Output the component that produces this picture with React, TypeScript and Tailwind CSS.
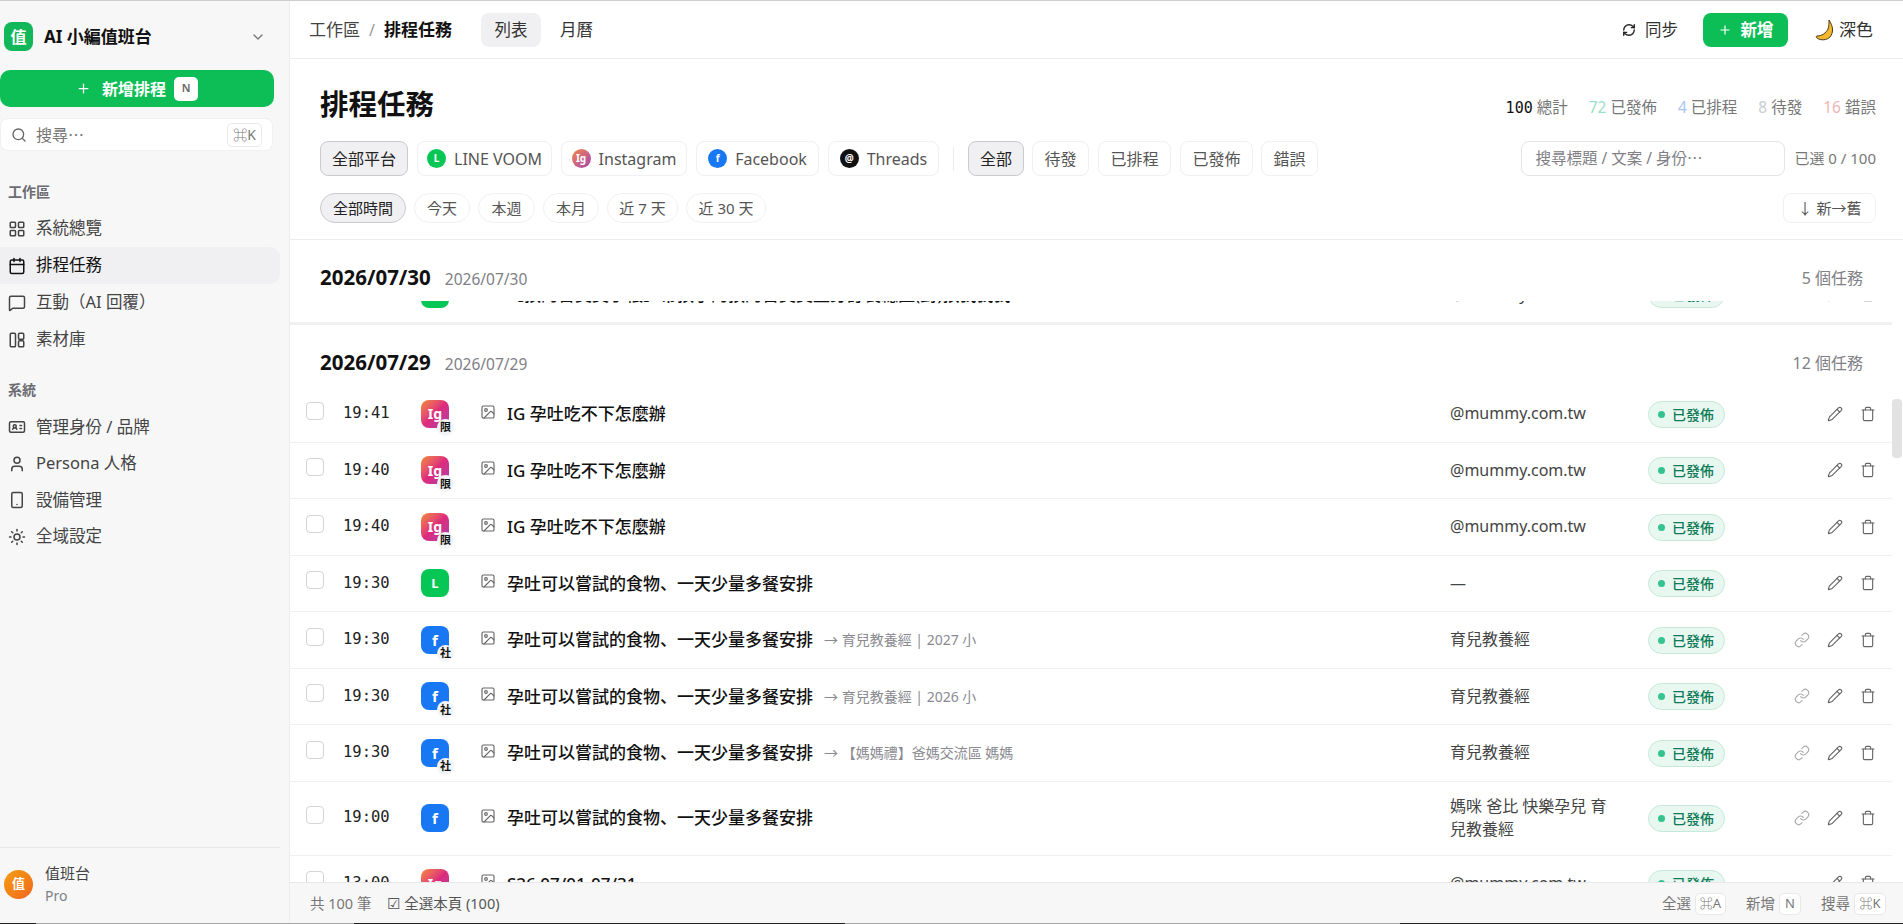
import { ChevronDown, IdCard, Image, LayoutGrid, Link, MessageSquare, Pencil, Plus, RefreshCw, Search, Smartphone, Sun, Trash, User, Calendar } from 'lucide-react';

type Platform = 'line' | 'ig' | 'fb';

type Task = {
  time: string;
  platform: Platform;
  badge?: string;
  title: string;
  target?: string;
  account: string;
  link?: boolean;
  tall?: boolean;
};

const tasks: Task[] = [
  { time: '19:41', platform: 'ig', badge: '限', title: 'IG 孕吐吃不下怎麼辦', account: '@mummy.com.tw' },
  { time: '19:40', platform: 'ig', badge: '限', title: 'IG 孕吐吃不下怎麼辦', account: '@mummy.com.tw' },
  { time: '19:40', platform: 'ig', badge: '限', title: 'IG 孕吐吃不下怎麼辦', account: '@mummy.com.tw' },
  { time: '19:30', platform: 'line', title: '孕吐可以嘗試的食物、一天少量多餐安排', account: '—' },
  { time: '19:30', platform: 'fb', badge: '社', title: '孕吐可以嘗試的食物、一天少量多餐安排', target: '→ 育兒教養經 | 2027 小', account: '育兒教養經', link: true },
  { time: '19:30', platform: 'fb', badge: '社', title: '孕吐可以嘗試的食物、一天少量多餐安排', target: '→ 育兒教養經 | 2026 小', account: '育兒教養經', link: true },
  { time: '19:30', platform: 'fb', badge: '社', title: '孕吐可以嘗試的食物、一天少量多餐安排', target: '→ 【媽媽禮】爸媽交流區 媽媽', account: '育兒教養經', link: true },
  { time: '19:00', platform: 'fb', title: '孕吐可以嘗試的食物、一天少量多餐安排', account: '媽咪 爸比 快樂孕兒 育兒教養經', link: true, tall: true },
];

function PlatformIcon({ platform, badge }: { platform: Platform; badge?: string }) {
  return (
    <div className="relative h-7 w-7">
      {platform === 'line' && <div className="flex h-7 w-7 items-center justify-center rounded-lg bg-[#06c755] text-[13px] font-bold text-white">L</div>}
      {platform === 'fb' && <div className="flex h-7 w-7 items-center justify-center rounded-lg bg-[#1877f2] text-[15px] font-bold text-white">f</div>}
      {platform === 'ig' && <div className="flex h-7 w-7 items-center justify-center rounded-lg bg-gradient-to-br from-[#f58529] via-[#dd2a7b] to-[#a93bb0] text-[14px] font-bold text-white">Ig</div>}
      {badge && (
        <span className="absolute -right-[5px] -bottom-[8px] flex h-[17px] w-[17px] items-center justify-center rounded-full bg-[#f3f4f6] text-[11px] font-semibold text-[#111]">
          {badge}
        </span>
      )}
    </div>
  );
}

function StatusBadge() {
  return (
    <span className="inline-flex h-[27px] w-[77px] items-center gap-[7px] rounded-full border border-[#c4e9da] bg-[#e8f8f1] pl-[9px] text-[14px] font-medium text-[#0f7a58]">
      <span className="h-[7px] w-[7px] rounded-full bg-[#34c38f]" />
      已發佈
    </span>
  );
}

function TaskRow({ task }: { task: Task }) {
  return (
    <div className={`flex items-center border-b border-[#f0f0f2] ${task.tall ? 'h-[74px]' : 'h-[56.5px]'}`}>
      <div className="ml-4 h-[18px] w-[18px] shrink-0 -translate-y-[3px] rounded-[4px] border border-[#d4d4d8] bg-white" />
      <div className="ml-[19px] w-[78px] shrink-0 font-['DejaVu_Sans_Mono',monospace] text-[15.5px] text-[#222]">{task.time}</div>
      <PlatformIcon platform={task.platform} badge={task.badge} />
      <Image size={16} strokeWidth={1.7} className="ml-[31px] shrink-0 -translate-y-[2px] text-[#666]" />
      <div className="ml-[11px] flex min-w-0 flex-1 items-center gap-[11px] whitespace-nowrap">
        <span className="text-[17px] font-medium text-[#111]">{task.title}</span>
        {task.target && <span className="text-[14px] text-[#8a8a90]">{task.target}</span>}
      </div>
      <div className="w-[198px] shrink-0 pr-[32px] text-[16px] leading-[23px] text-[#444]">{task.account}</div>
      <div className="w-[130px] shrink-0"><StatusBadge /></div>
      <div className="flex w-[98px] shrink-0 items-center justify-end gap-[17px] text-[#666]">
        {task.link && <Link size={16} strokeWidth={1.7} className="text-[#aaa]" />}
        <Pencil size={16} strokeWidth={1.7} />
        <Trash size={16} strokeWidth={1.7} />
      </div>
      <div className="w-4 shrink-0" />
    </div>
  );
}

function GroupHeader({ date, count }: { date: string; count: string }) {
  return (
    <div className="flex h-[61px] items-center justify-between bg-white pt-[14px] pr-[29px] pl-[30px]">
      <div className="flex items-baseline gap-[14px]">
        <span className="text-[20.5px] font-bold text-[#111]">{date}</span>
        <span className="text-[15.5px] text-[#808086]">{date}</span>
      </div>
      <span className="text-[16px] text-[#808086]">{count}</span>
    </div>
  );
}

function Kbd({ children, className = '' }: { children: React.ReactNode; className?: string }) {
  return (
    <span className={`flex items-center justify-center rounded-[5px] border border-[#e8e8ea] bg-white text-[13px] text-[#777] ${className}`}>
      {children}
    </span>
  );
}

function NavItem({ icon, label, active, compact }: { icon: React.ReactNode; label: string; active?: boolean; compact?: boolean }) {
  return (
    <div className={`flex w-[280px] items-center gap-[10px] rounded-r-[10px] pl-2 text-[16.5px] ${compact ? 'h-[36.5px]' : 'h-[37px]'} ${active ? 'bg-[#f0f0f2] text-[#111]' : 'text-[#444]'}`}>
      {icon}
      {label}
    </div>
  );
}

function PanelsIcon() {
  return (
    <svg width="18" height="18" viewBox="0 0 24 24" fill="none" stroke="currentColor" strokeWidth="2">
      <rect x="3" y="3" width="7" height="18" rx="1.5" />
      <rect x="14" y="3" width="7" height="8" rx="1.5" />
      <rect x="14" y="13" width="7" height="8" rx="1.5" />
    </svg>
  );
}

function Chip({ children, active, pill, className = '' }: { children: React.ReactNode; active?: boolean; pill?: boolean; className?: string }) {
  return (
    <div
      className={`flex shrink-0 items-center justify-center border ${pill ? 'h-[30px] rounded-full text-[15px]' : 'h-[35px] rounded-lg text-[16px]'} ${
        active ? 'border-[#c9c9ce] bg-[#f0f0f2] text-[#222]' : 'border-[#f0f0f2] bg-white text-[#555]'
      } ${className}`}
    >
      {children}
    </div>
  );
}

function Dot({ className, children }: { className: string; children: string }) {
  return <span className={`mr-2 flex h-[19px] w-[19px] items-center justify-center rounded-full text-[10px] font-bold text-white ${className}`}>{children}</span>;
}

export default function App() {
  return (
    <div className="relative flex h-[924px] w-[1903px] overflow-hidden border-t border-[#cfcfcf] bg-white font-['Noto_Sans','Noto_Sans_CJK_JP',sans-serif]">
      <aside className="flex h-full w-[290px] shrink-0 flex-col border-r border-[#ececee] bg-[#f7f7f8]">
        <div className="flex h-[69px] items-center pt-[2px] pr-[23px] pl-1">
          <div className="flex h-[29px] w-[29px] items-center justify-center rounded-lg bg-[#12b75a] text-[16px] font-bold text-white">值</div>
          <span className="ml-[11px] text-[17px] font-bold text-[#111]">AI 小編值班台</span>
          <ChevronDown size={16} className="ml-auto text-[#777]" />
        </div>
        <div className="flex h-[37px] w-[274px] items-center justify-center rounded-[10px] bg-[#0dbd55] text-[16px] font-bold text-white">
          <Plus size={15} strokeWidth={2} />
          <span className="ml-[11px]">新增排程</span>
          <span className="ml-[8px] flex h-6 w-6 items-center justify-center rounded-[5px] bg-white text-[11px] font-semibold text-[#666]">N</span>
        </div>
        <div className="mt-[11px] flex h-[33px] w-[273px] items-center rounded-lg border border-[#f0f0f2] bg-white pr-[10px] pl-[10px]">
          <Search size={16} className="text-[#666]" />
          <span className="ml-[9px] text-[16px] text-[#777]">搜尋⋯</span>
          <Kbd className="ml-auto h-6 w-[35px] !text-[14px]">⌘K</Kbd>
        </div>
        <div className="mt-[30px] mb-[8px] pl-2 text-[14px] font-semibold text-[#6b6b72]">工作區</div>
        <NavItem icon={<LayoutGrid size={18} />} label="系統總覽" />
        <NavItem icon={<Calendar size={18} />} label="排程任務" active />
        <NavItem icon={<MessageSquare size={18} />} label="互動（AI 回覆）" />
        <NavItem icon={<PanelsIcon />} label="素材庫" />
        <div className="mt-[21px] mb-[9px] pl-2 text-[14px] font-semibold text-[#6b6b72]">系統</div>
        <NavItem compact icon={<IdCard size={18} />} label="管理身份 / 品牌" />
        <NavItem compact icon={<User size={18} />} label="Persona 人格" />
        <NavItem compact icon={<Smartphone size={18} />} label="設備管理" />
        <NavItem compact icon={<Sun size={18} />} label="全域設定" />
        <div className="mt-auto flex h-[77px] w-[280px] items-center gap-3 border-t border-[#e8e8ea] pb-[4px] pl-1">
          <div className="flex h-[29px] w-[29px] items-center justify-center rounded-full bg-gradient-to-br from-[#f59e0b] to-[#f0641e] text-[13px] font-bold text-white">值</div>
          <div>
            <div className="text-[15px] leading-[23px] text-[#444]">值班台</div>
            <div className="text-[14px] leading-[22px] text-[#808086]">Pro</div>
          </div>
        </div>
      </aside>

      <main className="relative flex min-w-0 flex-1 flex-col">
        <header className="flex h-[58px] shrink-0 items-center border-b border-[#ececee] pt-[1px] pr-[30px] pl-[19px]">
          <span className="text-[17px] text-[#444]">工作區</span>
          <span className="mx-[9px] text-[16px] text-[#999]">/</span>
          <span className="text-[17px] font-bold text-[#111]">排程任務</span>
          <div className="ml-[29px] flex h-[34px] w-[60px] items-center justify-center rounded-lg bg-[#f0f0f2] text-[16.5px] text-[#333]">列表</div>
          <div className="ml-[19px] text-[16.5px] text-[#333]">月曆</div>
          <RefreshCw size={14} strokeWidth={2.4} className="ml-auto text-[#222]" />
          <span className="ml-[9px] text-[16.5px] text-[#333]">同步</span>
          <div className="ml-[25px] flex h-[34px] w-[85px] items-center justify-center gap-[9px] rounded-lg bg-[#0dbd55] text-[16.5px] font-bold text-white">
            <Plus size={14} />
            新增
          </div>
          <svg className="ml-[25px]" width="24" height="24" viewBox="0 0 24 24">
            <path d="M16 2c4 6 5 12 1 17-3 3-9 4-13 1-1-1-1-2 0-2 5 0 9-3 11-7 1-3 1-6 1-9z" fill="#f5b82e" stroke="#4a3a12" strokeWidth="1" />
          </svg>
          <span className="ml-[2px] text-[17px] text-[#333]">深色</span>
        </header>

        <section className="h-[181px] shrink-0 border-b border-[#ececee] pr-[27px] pl-[30px]">
          <div className="flex h-[82px] items-center justify-between pt-2">
            <h1 className="text-[28.5px] font-bold text-[#111]">排程任務</h1>
            <div className="mt-2 flex items-center gap-[21px] text-[15.5px] text-[#777]">
              <span><span className="mr-[4px] font-['DejaVu_Sans_Mono',monospace] text-[15px] text-[#111]">100</span>總計</span>
              <span><span className="mr-[4px] text-[#9adfc6]">72</span>已發佈</span>
              <span><span className="mr-[4px] text-[#a9c4ee]">4</span>已排程</span>
              <span><span className="mr-[4px] text-[#c9ccd2]">8</span>待發</span>
              <span><span className="mr-[4px] text-[#eeb6b6]">16</span>錯誤</span>
            </div>
          </div>
          <div className="flex items-center gap-[9px]">
            <Chip active className="w-[88px]">全部平台</Chip>
            <Chip className="w-[135px]"><Dot className="bg-[#06c755]">L</Dot>LINE VOOM</Chip>
            <Chip className="w-[126px]"><Dot className="bg-gradient-to-br from-[#f58529] to-[#a93bb0]">Ig</Dot>Instagram</Chip>
            <Chip className="w-[123px]"><Dot className="bg-[#1877f2]">f</Dot>Facebook</Chip>
            <Chip className="w-[111px]"><Dot className="bg-[#111]">@</Dot>Threads</Chip>
            <div className="mx-[5px] h-[24px] w-px bg-[#ececee]" />
            <Chip active className="w-[56px]">全部</Chip>
            <Chip className="-ml-[1px] w-[57px]">待發</Chip>
            <Chip className="w-[73px]">已排程</Chip>
            <Chip className="w-[73px]">已發佈</Chip>
            <Chip className="-ml-[1px] w-[57px]">錯誤</Chip>
            <div className="ml-auto flex h-[35px] w-[264px] items-center rounded-lg border border-[#e4e4e7] px-[13px] text-[15.5px] text-[#808086]">搜尋標題 / 文案 / 身份⋯</div>
            <span className="text-[15px] whitespace-nowrap text-[#777]">已選 0 / 100</span>
          </div>
          <div className="mt-[17px] flex items-center gap-2">
            <Chip pill active className="w-[86px]">全部時間</Chip>
            <Chip pill className="w-[56px]">今天</Chip>
            <Chip pill className="w-[57px]">本週</Chip>
            <Chip pill className="w-[56px]">本月</Chip>
            <Chip pill className="w-[71px]">近 7 天</Chip>
            <Chip pill className="w-[80px]">近 30 天</Chip>
            <Chip className="ml-auto !h-[30px] w-[93px] !text-[15px]">↓ 新→舊</Chip>
          </div>
        </section>

        <div className="min-h-0 w-[1602px] flex-1 overflow-hidden">
          <GroupHeader date="2026/07/30" count="5 個任務" />
          <div className="h-[24px] overflow-hidden border-b-2 border-[#f0f0f2]">
            <div className="-mt-[34.5px]">
              <TaskRow task={{ time: '09:00', platform: 'line', title: '【孩的書莫莫手帳】帶孩子的孩的書莫莫量身訂製總區(對)孩我我我', account: '@mummy.com.tw' }} />
            </div>
          </div>
          <GroupHeader date="2026/07/29" count="12 個任務" />
          {tasks.map((task, i) => (
            <TaskRow key={i} task={task} />
          ))}
          <TaskRow task={{ time: '13:00', platform: 'ig', title: 'S26 07/01-07/31', account: '@mummy.com.tw' }} />
        </div>

        <div className="absolute top-[398px] right-[1px] h-[59px] w-[10px] rounded-[4px] bg-[#e2e2e2]" />

        <footer className="absolute right-0 bottom-0 left-0 flex h-[42px] items-center gap-4 border-t border-[#e8e8ea] bg-[#f7f7f8] pr-[17px] pl-[20px] text-[14.5px] text-[#777]">
          <span>共 100 筆</span>
          <span className="text-[#555]">☑ 全選本頁 (100)</span>
          <span className="ml-auto">全選</span>
          <Kbd className="-ml-3 h-[22px] w-[31px] text-[12px]">⌘A</Kbd>
          <span className="ml-1">新增</span>
          <Kbd className="-ml-3 h-[22px] w-[22px] text-[11px]">N</Kbd>
          <span className="ml-1">搜尋</span>
          <Kbd className="-ml-3 h-[22px] w-[32px] text-[12px]">⌘K</Kbd>
        </footer>
      </main>

      {/* 1px window edge along the bottom of the capture */}
      <div className="absolute right-0 bottom-0 left-0 flex h-px bg-[#a8a8a8]">
        <div className="w-[36px] bg-[#222]" />
        <div className="ml-[318px] w-[491px] bg-[#222]" />
        <div className="ml-auto w-[503px] bg-[#222]" />
      </div>
    </div>
  );
}
